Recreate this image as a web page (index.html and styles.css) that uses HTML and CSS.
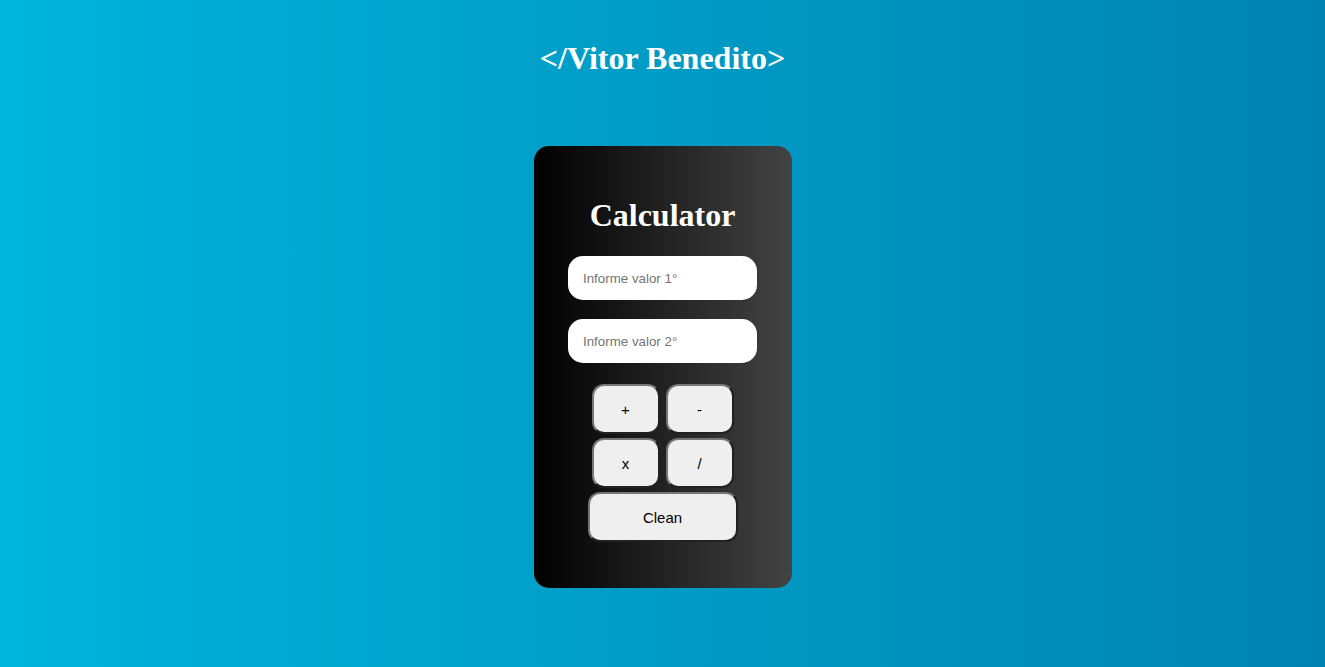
FILE: index.html
```html
<!DOCTYPE html>
<html lang="pt-BR">
<head>
<meta charset="utf-8">
<title>Calculator</title>
<link rel="stylesheet" href="styles.css">
</head>
<body>
  <h1 class="site-title">&lt;/Vitor Benedito&gt;</h1>
  <main class="card">
    <h2 class="card-title">Calculator</h2>
    <input class="field" type="text" placeholder="Informe valor 1°">
    <input class="field" type="text" placeholder="Informe valor 2°">
    <div class="ops">
      <button class="btn">+</button>
      <button class="btn">-</button>
      <button class="btn">x</button>
      <button class="btn">/</button>
    </div>
    <button class="btn btn-clean">Clean</button>
  </main>
</body>
</html>
```

FILE: styles.css
```css
html, body {
  margin: 0;
  padding: 0;
}

body {
  min-height: 100vh;
  background: linear-gradient(to right, #00b4db, #0083b0);
  font-family: "Liberation Serif", "Times New Roman", serif;
  display: flex;
  flex-direction: column;
  align-items: center;
}

.site-title {
  margin: 40px 0 0;
  font-size: 32px;
  font-weight: bold;
  color: #fff;
  line-height: normal;
}

.card {
  margin-top: 69px;
  width: 258px;
  height: 442px;
  box-sizing: border-box;
  padding-top: 51px;
  border-radius: 15px;
  background: linear-gradient(to right, #000000, #434343);
  display: flex;
  flex-direction: column;
  align-items: center;
}

.card-title {
  margin: 0 0 22px;
  font-size: 32px;
  font-weight: bold;
  color: #fff;
  line-height: normal;
}

.field {
  width: 189px;
  height: 44px;
  box-sizing: border-box;
  border: none;
  border-radius: 15px;
  padding: 0 15px;
  background: #fff;
  font-family: "Liberation Sans", Arial, sans-serif;
  font-size: 13.33px;
  color: #000;
  outline: none;
  margin-bottom: 19px;
}

.field::placeholder {
  color: #757575;
}

.ops {
  margin-top: 2px;
  display: grid;
  grid-template-columns: 68px 68px;
  column-gap: 6px;
  row-gap: 4px;
}

.btn {
  width: 68px;
  height: 50px;
  box-sizing: border-box;
  border: 2px outset #767676;
  border-radius: 12px;
  background: #efefef;
  color: #000;
  font-family: "Liberation Sans", Arial, sans-serif;
  font-size: 15px;
  padding: 0;
  cursor: pointer;
}

.btn-clean {
  margin-top: 4px;
  width: 150px;
}
```
